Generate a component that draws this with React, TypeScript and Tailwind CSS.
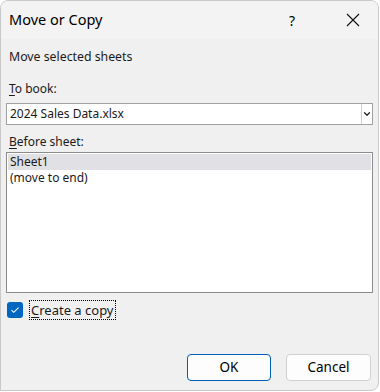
import { ChevronDown } from 'lucide-react';

const font = { fontFamily: '"Segoe UI", "Noto Sans", "Open Sans", sans-serif' };

const App = () => {
	return (
		<div className="w-[380px] h-[392px] bg-white" style={font}>
			<div className="flex flex-col w-[379px] h-[391px] rounded-t-[8px] rounded-br-[8px] border border-[#c9c9c9] bg-[#f0f0f0] overflow-hidden text-[12px] text-[#1a1a1a]">
				{/* title bar */}
				<div className="flex items-center h-[38px] bg-[#f3f3f3] pl-[8px]">
					<span className="text-[14.5px] text-black">Move or Copy</span>
					<span className="ml-auto mr-[51px] text-[14px] text-black">?</span>
					<svg width="14" height="14" viewBox="0 0 14 14" className="mr-[18px]">
						<path d="M1 1L13 13M13 1L1 13" stroke="#111" strokeWidth="1.1" />
					</svg>
				</div>

				<div className="flex flex-col px-[5px]">
					<div className="pl-[3px] mt-[10px] h-[16px] leading-[16px] text-[12.3px]">Move selected sheets</div>

					<div className="pl-[3px] mt-[16px] h-[16px] leading-[16px]">
						<span className="underline underline-offset-2">T</span>o book:
					</div>
					<div className="flex items-center mt-[6px] h-[22px] border border-[#a0a0a0] bg-white">
						<span className="pl-[3px] flex-1">2024 Sales Data.xlsx</span>
						<div className="flex items-center justify-center w-[11px] h-full border-l border-[#d0d0d0]">
							<ChevronDown size={10} strokeWidth={3} color="#222" />
						</div>
					</div>

					<div className="pl-[3px] mt-[9px] h-[16px] leading-[16px]">
						<span className="underline underline-offset-2">B</span>efore sheet:
					</div>
					<div className="flex flex-col mt-[2px] h-[141px] border border-[#8c8c8c] bg-white p-px">
						<div className="h-[16px] leading-[16px] pl-[2px] bg-[#e1e1e5]">Sheet1</div>
						<div className="h-[16px] leading-[16px] pl-[2px]">(move to end)</div>
					</div>

					<div className="flex items-center mt-[7px] pl-px">
						<div className="flex items-center justify-center w-[16px] h-[16px] rounded-[3px] bg-[#0067c0]">
							<svg width="10" height="8" viewBox="0 0 10 8">
								<path d="M1.5 4.2L3.8 6.3L8.5 1.7" stroke="white" strokeWidth="1.1" fill="none" />
							</svg>
						</div>
						<div className="ml-[6px] px-px h-[20px] leading-[18px] border border-dotted border-black text-[13px]">
							<span className="underline underline-offset-2">C</span>reate a copy
						</div>
					</div>

					<div className="flex justify-end gap-[15px] mt-[34px] pr-[2px]">
						<button className="w-[84px] h-[27px] rounded-[4px] border border-[#005fb8] bg-[#fdfdfd] text-[13.5px] text-black">
							OK
						</button>
						<button className="w-[85px] h-[27px] rounded-[4px] border border-[#d0d0d0] bg-[#fdfdfd] text-[13.5px] text-black">
							Cancel
						</button>
					</div>
				</div>
			</div>
		</div>
	);
};

export default App;
